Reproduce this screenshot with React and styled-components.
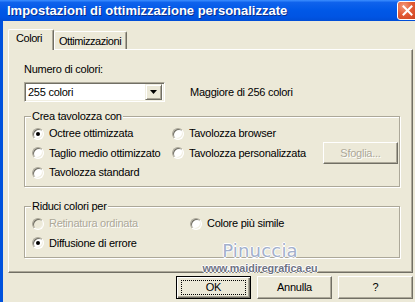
import React from "react";
import styled, { createGlobalStyle } from "styled-components";

const Global = createGlobalStyle`
  html, body { margin: 0; padding: 0; background: #ECE9D8; overflow: hidden; }
  * { box-sizing: border-box; }
`;

const Window = styled.div`
  position: relative;
  width: 415px;
  height: 302px;
  overflow: hidden;
  display: flex;
  flex-direction: column;
  background: #ECE9D8;
  font-family: "Liberation Sans", Arial, sans-serif;
  font-size: 11px;
  letter-spacing: -0.25px;
  color: #000;
`;

const TitleBar = styled.div`
  height: 21px;
  flex: none;
  display: flex;
  align-items: center;
  justify-content: space-between;
  padding-left: 7px;
  background: linear-gradient(#3C8EFF 0%, #0F62EC 12%, #0058E7 50%, #0054E3 80%, #004ED6 100%);
  overflow: hidden;
`;

const Title = styled.div`
  font-family: "Liberation Sans", Arial, sans-serif;
  font-weight: bold;
  font-size: 13px;
  letter-spacing: 0;
  color: #fff;
  text-shadow: 1px 1px 0 #0A2E8C;
  line-height: 15px;
`;

const CloseBtn = styled.div`
  width: 21px;
  height: 19px;
  margin-right: -3px;
  align-self: flex-start;
  margin-top: 1px;
  border: 1px solid #fff;
  border-radius: 3px;
  background: radial-gradient(circle at 30% 25%, #F29A7C 0%, #E35B35 45%, #C9401C 100%);
  display: flex;
  align-items: center;
  justify-content: center;
`;

const Body = styled.div`
  flex: 1;
  border-left: 3px solid #0052DD;
  padding-top: 8px;
  display: flex;
  flex-direction: column;
`;

const TabStrip = styled.div`
  display: flex;
  align-items: flex-end;
  height: 21px;
  margin-left: 5px;
  margin-bottom: -1px;
  position: relative;
  z-index: 1;
`;

const Tab = styled.div`
  height: ${(p) => (p.$active ? "21px" : "18px")};
  margin-bottom: ${(p) => (p.$active ? "0" : "1px")};
  padding: ${(p) => (p.$active ? "2px 0 0 7px" : "3px 0 0 4px")};
  width: ${(p) => p.$w}px;
  background: #ECE9D8;
  border-top: 1px solid #fff;
  border-left: 1px solid #fff;
  border-right: 1px solid #716F64;
  border-radius: 2px 2px 0 0;
  box-shadow: inset -1px 0 0 #ACA899;
  line-height: 13px;
  letter-spacing: -0.45px;
  white-space: nowrap;
  overflow: hidden;
`;

const Panel = styled.div`
  margin-left: 5px;
  width: 405px;
  height: 224px;
  flex: none;
  border-top: 1px solid #fff;
  border-left: 1px solid #fff;
  border-right: 1px solid #716F64;
  border-bottom: 1px solid #716F64;
  box-shadow: inset -1px -1px 0 #ACA899;
  padding-left: 15px;
  display: flex;
  flex-direction: column;
`;

const Label = styled.div`
  line-height: 13px;
  margin-top: 13px;
`;

const ComboRow = styled.div`
  display: flex;
  align-items: center;
  margin-top: 6px;
  height: 20px;
`;

const Combo = styled.div`
  width: 141px;
  height: 20px;
  background: #fff;
  border-top: 1px solid #ACA899;
  border-left: 1px solid #ACA899;
  border-right: 1px solid #fff;
  border-bottom: 1px solid #fff;
  box-shadow: inset 1px 1px 0 #716F64, inset -1px -1px 0 #F1EFE2;
  display: flex;
  align-items: center;
  justify-content: space-between;
  padding: 2px 2px 2px 3px;
  line-height: 13px;
`;

const ComboArrow = styled.div`
  width: 17px;
  height: 16px;
  background: #ECE9D8;
  border-top: 1px solid #F1EFE2;
  border-left: 1px solid #F1EFE2;
  border-right: 1px solid #716F64;
  border-bottom: 1px solid #716F64;
  box-shadow: inset 1px 1px 0 #fff, inset -1px -1px 0 #ACA899;
  display: flex;
  align-items: center;
  justify-content: center;
`;

const SideText = styled.div`
  margin-left: 25px;
  line-height: 13px;
`;

const Group = styled.div`
  position: relative;
  width: 376px;
  height: ${(p) => p.$h}px;
  margin-top: ${(p) => p.$mt}px;
  border: 1px solid #ACA899;
  box-shadow: inset 1px 1px 0 #fff, 1px 1px 0 #fff;
  padding: 7px 1px 0 7px;
  display: grid;
  grid-template-columns: ${(p) => p.$cols};
  grid-auto-rows: ${(p) => p.$row}px;
  align-items: center;
`;

const GroupCaption = styled.div`
  position: absolute;
  top: -7px;
  left: 6px;
  padding: 0 1px;
  background: #ECE9D8;
  line-height: 13px;
`;

const RadioRow = styled.div`
  display: flex;
  align-items: center;
  gap: 5px;
  line-height: 13px;
  white-space: nowrap;
  grid-column: ${(p) => p.$col || "auto"};
  grid-row: ${(p) => p.$row || "auto"};
  color: ${(p) => (p.$disabled ? "#ACA899" : "#000")};
  text-shadow: ${(p) => (p.$disabled ? "1px 1px 0 #fff" : "none")};
`;

const RadioCircle = styled.span`
  width: 12px;
  height: 12px;
  flex: none;
  border-radius: 50%;
  border: 1px solid;
  border-color: #ACA899 #fff #fff #ACA899;
  box-shadow: inset 1px 1px 0 #716F64, inset -1px -1px 0 #F1EFE2;
  background: ${(p) => (p.$disabled ? "#ECE9D8" : "#fff")};
  display: flex;
  align-items: center;
  justify-content: center;
`;

const Dot = styled.span`
  width: 4px;
  height: 4px;
  border-radius: 50%;
  background: #000;
`;

const Button = styled.div`
  width: 75px;
  height: ${(p) => p.$h || 23}px;
  display: flex;
  align-items: center;
  justify-content: center;
  background: #ECE9D8;
  line-height: 13px;
  border-top: 1px solid ${(p) => (p.$default ? "#000" : "#fff")};
  border-left: 1px solid ${(p) => (p.$default ? "#000" : "#fff")};
  border-right: 1px solid ${(p) => (p.$default ? "#000" : "#716F64")};
  border-bottom: 1px solid ${(p) => (p.$default ? "#000" : "#716F64")};
  box-shadow: ${(p) =>
    p.$default
      ? "inset 1px 1px 0 #fff, inset -1px -1px 0 #716F64, inset -2px -2px 0 #ACA899"
      : "inset -1px -1px 0 #ACA899"};
  color: ${(p) => (p.$disabled ? "#ACA899" : "#000")};
  text-shadow: ${(p) => (p.$disabled ? "1px 1px 0 #fff" : "none")};
  grid-column: ${(p) => p.$col || "auto"};
  grid-row: ${(p) => p.$row || "auto"};
`;

const Focus = styled.span`
  width: 65px;
  height: 15px;
  border: 1px dotted #000;
  display: flex;
  align-items: center;
  justify-content: center;
`;

const ButtonRow = styled.div`
  display: flex;
  justify-content: flex-end;
  gap: 6px;
  padding-right: 2px;
  margin-top: 3px;
`;

const Watermark = styled.div`
  position: absolute;
  left: 196px;
  top: 241px;
  width: 128px;
  display: flex;
  flex-direction: column;
  align-items: center;
  pointer-events: none;
`;

const WmName = styled.div`
  font-family: "DejaVu Sans", sans-serif;
  font-size: 18px;
  letter-spacing: 0.2px;
  line-height: 20px;
  color: #A3B0CC;
  text-shadow: 1px 0 0 #fff, -1px 0 0 #fff, 0 1px 0 #fff, 0 -1px 0 #fff;
`;

const WmUrl = styled.div`
  font-family: "Liberation Sans", Arial, sans-serif;
  font-weight: bold;
  font-size: 10.8px;
  letter-spacing: -0.1px;
  line-height: 12px;
  margin-top: 1px;
  color: #6E7282;
  text-shadow: 1px 0 0 #fff, -1px 0 0 #fff, 0 1px 0 #fff, 0 -1px 0 #fff;
`;

function Radio({ label, checked, disabled, col, row }) {
  return (
    <RadioRow $disabled={disabled} $col={col} $row={row}>
      <RadioCircle $disabled={disabled}>{checked && <Dot />}</RadioCircle>
      <span>{label}</span>
    </RadioRow>
  );
}

export default function App() {
  return (
    <>
      <Global />
      <Window>
        <TitleBar>
          <Title>Impostazioni di ottimizzazione personalizzate</Title>
          <CloseBtn>
            <svg width="11" height="11" viewBox="0 0 11 11">
              <path d="M1.5 1.5 L9.5 9.5 M9.5 1.5 L1.5 9.5" stroke="#fff" strokeWidth="2" strokeLinecap="square" />
            </svg>
          </CloseBtn>
        </TitleBar>
        <Body>
          <TabStrip>
            <Tab $active $w={46}>Colori</Tab>
            <Tab $w={73}>Ottimizzazioni</Tab>
          </TabStrip>
          <Panel>
            <Label>Numero di colori:</Label>
            <ComboRow>
              <Combo>
                <span>255 colori</span>
                <ComboArrow>
                  <svg width="7" height="4" viewBox="0 0 7 4">
                    <path d="M0 0 H7 L3.5 4 Z" fill="#000" />
                  </svg>
                </ComboArrow>
              </Combo>
              <SideText>Maggiore di 256 colori</SideText>
            </ComboRow>
            <Group $h={71} $mt={14} $cols="140px 1fr 75px" $row={19.5}>
              <GroupCaption>Crea tavolozza con</GroupCaption>
              <Radio label="Octree ottimizzata" checked col={1} row={1} />
              <Radio label="Tavolozza browser" col={2} row={1} />
              <Radio label="Taglio medio ottimizzato" col={1} row={2} />
              <Radio label="Tavolozza personalizzata" col={2} row={2} />
              <Button $disabled $h={22} $col={3} $row={2}>Sfoglia...</Button>
              <Radio label="Tavolozza standard" col={1} row={3} />
            </Group>
            <Group $h={52} $mt={19} $cols="158px 1fr" $row={19.5}>
              <GroupCaption>Riduci colori per</GroupCaption>
              <Radio label="Retinatura ordinata" disabled col={1} row={1} />
              <Radio label="Colore più simile" col={2} row={1} />
              <Radio label="Diffusione di errore" checked col={1} row={2} />
            </Group>
          </Panel>
          <ButtonRow>
            <Button $default>
              <Focus>OK</Focus>
            </Button>
            <Button>Annulla</Button>
            <Button>?</Button>
          </ButtonRow>
        </Body>
        <Watermark>
          <WmName>Pinuccia</WmName>
          <WmUrl>www.maidiregrafica.eu</WmUrl>
        </Watermark>
      </Window>
    </>
  );
}
